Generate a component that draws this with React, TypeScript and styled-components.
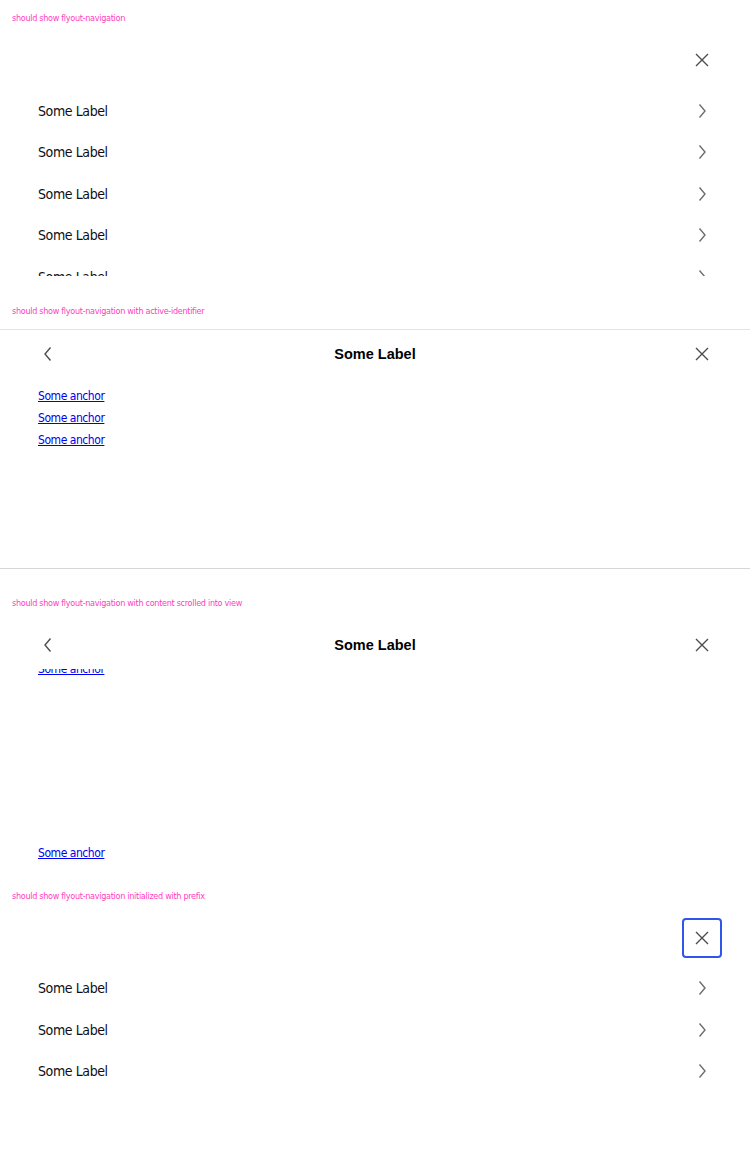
import React from "react";
import styled, { createGlobalStyle } from "styled-components";

const Global = createGlobalStyle`
  html, body { margin: 0; padding: 0; background: #fff; }
  body { font-family: "DejaVu Sans Condensed", "DejaVu Sans", sans-serif; }
  * { box-sizing: border-box; }
`;

const Page = styled.div`
  width: 750px;
  display: flex;
  flex-direction: column;
`;

const Section = styled.section`
  display: flex;
  flex-direction: column;
  padding-bottom: 16.5px;
`;

const Caption = styled.p`
  margin: 0;
  height: 36px;
  display: flex;
  align-items: center;
  padding-left: 12px;
  font-family: "DejaVu Sans Condensed", "DejaVu Sans", sans-serif;
  font-stretch: condensed;
  font-size: 9px;
  letter-spacing: -0.3px;
  color: #ff3cbf;
`;

const Frame = styled.div<{ $bordered?: boolean }>`
  height: 240px;
  overflow: hidden;
  display: flex;
  flex-direction: column;
  border-top: ${(p) => (p.$bordered ? "1px solid #e3e3e3" : "none")};
  border-bottom: ${(p) => (p.$bordered ? "1px solid #d6d6d6" : "none")};
`;

const Header = styled.div`
  height: 48px;
  flex: none;
  display: grid;
  grid-template-columns: 40px 1fr 40px;
  align-items: center;
  padding: 0 28px;
  background: #fff;
  position: relative;
  z-index: 1;
`;

const Title = styled.h2`
  margin: 0;
  text-align: center;
  font-family: "Liberation Sans", Arial, sans-serif;
  font-weight: 700;
  font-size: 14.5px;
  color: #000;
`;

const IconButton = styled.button<{ $focused?: boolean }>`
  width: 40px;
  height: 40px;
  padding: 0;
  margin: 0;
  border: 2px solid ${(p) => (p.$focused ? "#2f55ea" : "transparent")};
  border-radius: 4px;
  background: transparent;
  display: flex;
  align-items: center;
  justify-content: center;
  color: #4a4d52;
`;

const CloseSlot = styled.div`
  grid-column: 3;
`;

const BackSlot = styled.div`
  grid-column: 1;
`;

const List = styled.ul`
  list-style: none;
  margin: 0;
  padding: 6px 0 0;
`;

const Row = styled.li`
  height: 41.5px;
  display: flex;
  align-items: center;
  justify-content: space-between;
  padding: 0 36px 0 38px;
  font-family: "DejaVu Sans Condensed", "DejaVu Sans", sans-serif;
  font-stretch: condensed;
  font-size: 14px;
  letter-spacing: -0.4px;
  color: #0e0e12;
`;

const ChevronBox = styled.span`
  width: 24px;
  height: 24px;
  display: flex;
  align-items: center;
  justify-content: center;
  color: #6b6d70;
`;

const Content = styled.div`
  flex: 1;
  overflow: hidden;
  padding: 7px 38px 0;
  display: flex;
  flex-direction: column;
`;

const Scroller = styled.div`
  flex: 1;
  overflow-y: auto;
  scrollbar-width: none;
  &::-webkit-scrollbar { display: none; }
`;

const ScrollInner = styled.div`
  padding: 7px 38px 20px;
  display: flex;
  flex-direction: column;
`;

const Anchor = styled.a`
  display: block;
  width: max-content;
  line-height: 22px;
  font-family: "DejaVu Sans Condensed", "DejaVu Sans", sans-serif;
  font-stretch: condensed;
  font-size: 12px;
  letter-spacing: -0.45px;
  color: #0000ee;
  text-decoration: underline;
`;

const Spacer = styled.div<{ $h: number }>`
  height: ${(p) => p.$h}px;
  flex: none;
`;

const CloseIcon = () => (
  <svg width="16" height="16" viewBox="0 0 16 16" fill="none">
    <path d="M2 2L14 14M14 2L2 14" stroke="currentColor" strokeWidth="1.4" />
  </svg>
);

const ChevronRight = () => (
  <svg width="10" height="16" viewBox="0 0 10 16" fill="none">
    <path d="M2.5 1.5L8 8L2.5 14.5" stroke="currentColor" strokeWidth="1.4" />
  </svg>
);

const ChevronLeft = () => (
  <svg width="10" height="16" viewBox="0 0 10 16" fill="none">
    <path d="M7.5 1.5L2 8L7.5 14.5" stroke="currentColor" strokeWidth="1.4" />
  </svg>
);

const Close: React.FC<{ focused?: boolean }> = ({ focused }) => (
  <CloseSlot>
    <IconButton $focused={focused} aria-label="Close">
      <CloseIcon />
    </IconButton>
  </CloseSlot>
);

const Back = () => (
  <BackSlot>
    <IconButton aria-label="Back">
      <ChevronLeft />
    </IconButton>
  </BackSlot>
);

const MainList: React.FC<{ count: number }> = ({ count }) => (
  <List>
    {Array.from({ length: count }).map((_, i) => (
      <Row key={i}>
        Some Label
        <ChevronBox>
          <ChevronRight />
        </ChevronBox>
      </Row>
    ))}
  </List>
);

export default function App() {
  return (
    <Page>
      <Global />
      <Section>
        <Caption>should show flyout-navigation</Caption>
        <Frame>
          <Header>
            <Close />
          </Header>
          <MainList count={6} />
        </Frame>
      </Section>

      <Section>
        <Caption>should show flyout-navigation with active-identifier</Caption>
        <Frame $bordered>
          <Header>
            <Back />
            <Title>Some Label</Title>
            <Close />
          </Header>
          <Content>
            <Anchor href="#">Some anchor</Anchor>
            <Anchor href="#">Some anchor</Anchor>
            <Anchor href="#">Some anchor</Anchor>
          </Content>
        </Frame>
      </Section>

      <Section>
        <Caption>should show flyout-navigation with content scrolled into view</Caption>
        <Frame>
          <Header>
            <Back />
            <Title>Some Label</Title>
            <Close />
          </Header>
          <Scroller
            ref={(el) => {
              if (el) el.scrollTop = 62;
            }}
          >
            <ScrollInner>
              <Anchor href="#">Some anchor</Anchor>
              <Anchor href="#">Some anchor</Anchor>
              <Anchor href="#">Some anchor</Anchor>
              <Spacer $h={162} />
              <Anchor href="#">Some anchor</Anchor>
            </ScrollInner>
          </Scroller>
        </Frame>
      </Section>

      <Section>
        <Caption>should show flyout-navigation initialized with prefix</Caption>
        <Frame>
          <Header>
            <Close focused />
          </Header>
          <MainList count={3} />
        </Frame>
      </Section>
    </Page>
  );
}
